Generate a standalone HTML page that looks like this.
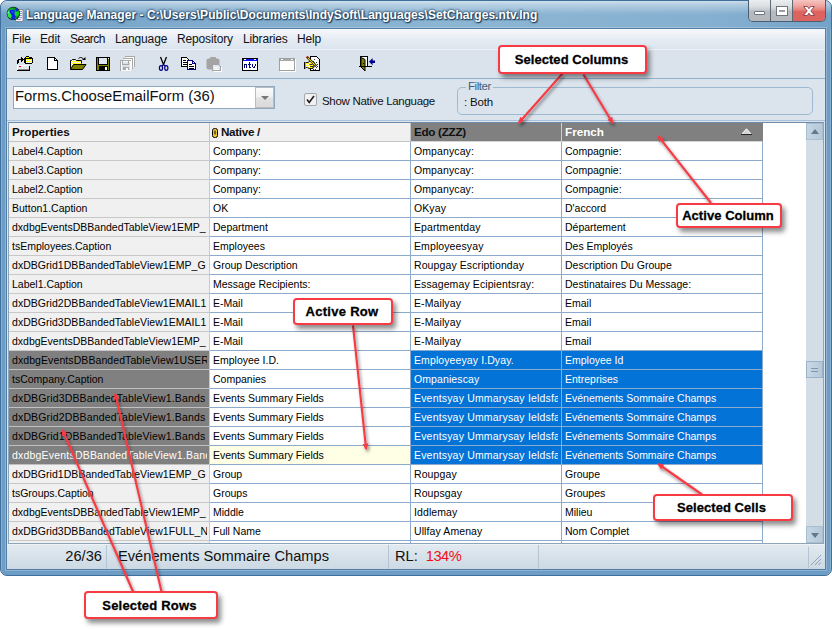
<!DOCTYPE html>
<html><head><meta charset="utf-8"><title>Language Manager</title>
<style>
*{box-sizing:border-box;margin:0;padding:0}
html,body{width:832px;height:629px;background:#fff;overflow:hidden;font-family:"Liberation Sans",sans-serif;}
body{position:relative}
body>div,body>svg{position:absolute}
/* frame */
#win{left:0;top:0;width:832px;height:576px;border-radius:7px 7px 7px 7px;background:#6d9dc4;border:1px solid #3f6f9c;box-shadow:inset 1px 1px 0 rgba(255,255,255,.2),inset -1px 0 0 rgba(255,255,255,.2)}
#tb{left:1px;top:1px;width:830px;height:27px;border-radius:6px 6px 0 0;background:linear-gradient(180deg,rgba(255,255,255,.6) 0,rgba(255,255,255,.4) 3px,rgba(255,255,255,.05) 12px,rgba(255,255,255,0) 14px),linear-gradient(90deg,#70a0c6 0%,#80abcd 22%,#8db6d3 55%,#86b0d0 85%,#74a3c8 100%)}
#title{left:26px;top:8px;font-size:12px;font-weight:bold;color:#fff;white-space:nowrap;letter-spacing:.05px;text-shadow:0 0 3px #1d3d5c,0 0 2px #1d3d5c,1px 1px 1px #1d3d5c}
#capbtns{left:748px;top:0;height:22px;width:78px;border:1px solid #4b5f72;border-top:none;border-radius:0 0 5px 5px;overflow:hidden;display:flex}
.cb{height:100%;position:relative}
.cb.min,.cb.max{width:22px;background:linear-gradient(180deg,#eceef0 0,#dcdfe2 30%,#c4c8cc 48%,#b7bbbf 55%,#b4b8bc 100%);border-right:1px solid #5d6a76}
.cb.cls{width:32px;background:linear-gradient(180deg,#f6c6c3 0,#efa19c 30%,#e67f79 48%,#de625c 56%,#dc6560 100%)}
.cb.min i{position:absolute;left:5px;top:11px;width:11px;height:4px;background:#fff;border:1px solid #6b7680;border-radius:1px}
.cb.max i{position:absolute;left:6px;top:7px;width:10px;height:8px;border:2.5px solid #fff;border-top-width:3px;border-bottom-width:3px;outline:1px solid #6b7680;background:#9aa0a6;border-radius:0}
.cb.cls svg{position:absolute;left:10px;top:6px}
#client{left:6px;top:28px;width:820px;height:542px;box-shadow:0 0 0 1px rgba(255,255,255,.22);background:#dbe4ed;border:1px solid #547fa9}
#menu{left:7px;top:29px;width:818px;height:20px;background:linear-gradient(180deg,#f6f8fb 0,#e6ecf3 50%,#dbe4ee 100%);font-size:12px;color:#111}
#menu span{position:absolute;top:3px;letter-spacing:-.15px}
#tool{left:7px;top:49px;width:818px;height:30px;background:#dae3ec;border-top:1px solid #eef2f7;border-bottom:1px solid #8fb0cf}
#tool svg{position:absolute}
#combo{left:13px;top:86px;width:262px;height:23px;background:#fff;border:1px solid #8da9c4;font-size:14.85px;color:#111;line-height:19px;padding-left:1px;white-space:nowrap}
#dd{position:absolute;right:0;top:0;width:19px;height:21px;background:linear-gradient(180deg,#fbfbfb 0,#f0f0f0 48%,#e1e1e1 52%,#dbdbdb 100%);border:1px solid #bcbcbc}
#dd i{position:absolute;left:5px;top:8px;border:4px solid transparent;border-top:4px solid #777;border-bottom:none}
#chk{left:304px;top:93px;width:13px;height:13px;background:#f1f1f1;border:1px solid #a4a8ad;border-radius:2px}
#chk svg{position:absolute;left:-1px;top:-1px}
#chkl{left:322px;top:95px;font-size:11.5px;color:#111;letter-spacing:-.3px;white-space:nowrap}
#fs{left:457px;top:87px;width:356px;height:28px;border:1px solid #9dbad3;border-radius:5px}
#fsl{left:466px;top:80px;font-size:11.5px;color:#3f607f;background:#dbe4ed;padding:0 2px;letter-spacing:-.45px}
#fst{left:464px;top:96px;font-size:11.5px;color:#111;letter-spacing:-.2px}
/* grid */
#gline{left:7px;top:120px;width:818px;height:1px;background:#a9c2da}
#grid{left:8px;top:122px;width:816px;height:422px;background:#fff;border:1px solid #8ea4b8;border-top-color:#6f8ca8}
#hdr{left:9px;top:123px;width:754px;height:19px}
.h{position:absolute;top:0;height:19px;font-size:11.7px;font-weight:bold;line-height:17px;padding-left:3px;white-space:nowrap;overflow:hidden;border-bottom:1px solid #c4c4c4;border-right:1px solid #c4c4c4;background:#f0f0f0;color:#111}
.h1{left:0;width:201px}.h3{letter-spacing:-.3px}.h2{left:201px;width:201px;padding-left:2px;letter-spacing:-.32px}.h3{left:402px;width:151px}.h4{left:553px;width:201px}
.h3,.h4{background:#808080;border-color:#d4d4d4;border-right-color:#d0d0d0}
.h4{color:#fff;border-right-color:#808080}
.h .clip{position:relative;top:2px;margin-right:3px}
.h .sort{position:absolute;right:10px;top:5px}
.r{left:9px;width:754px;height:19px;font-size:10.5px;line-height:18px;color:#000}
.c{position:absolute;top:0;height:19px;padding-left:3px;white-space:nowrap;overflow:hidden;border-bottom:1px solid #8caacb;border-right:1px solid #8caacb;background:#fff}
.c1{left:0;width:201px;background:#f0f0f0;border-color:#c8c8c8}
.c2{left:201px;width:201px}.c3{left:402px;width:151px;letter-spacing:.1px}.c4{left:553px;width:201px}
.sel .c1{background:#808080;border-bottom-color:#c0c0c0}
.sel .c3,.sel .c4{background:#0473d7;color:#fff}
.act .c1{color:#fff}
.act .c2{background:#ffffe6}
#lastrow{left:9px;top:541px;width:754px;height:2px;background:linear-gradient(90deg,#f0f0f0 0,#f0f0f0 200px,#c8c8c8 200px,#c8c8c8 201px,#fff 201px,#fff 401px,#8caacb 401px,#8caacb 402px,#fff 402px,#fff 552px,#8caacb 552px,#8caacb 553px,#fff 553px,#fff 753px,#8caacb 753px,#8caacb 754px)}
#sb{left:806px;top:123px;width:17px;height:420px;background:#d3dde6}
.sbb{position:absolute;left:0;width:17px;height:17px;background:linear-gradient(90deg,#c5d5e3,#b5c9da);border:1px solid #a9bed0}
.sbb.up{top:0}.sbb.dn{bottom:0}
.sbb i{position:absolute;left:4px;border:4.5px solid transparent}
.sbb.up i{border-bottom:5px solid #62788d;border-top:none;top:5px}
.sbb.dn i{top:6px;border-top:5px solid #62788d;border-bottom:none}
.thumb{position:absolute;left:0;top:238px;width:17px;height:17px;background:linear-gradient(90deg,#c9d8e6,#b4c8da);border:1px solid #9bb3c8}
.thumb i{position:absolute;left:4px;top:6px;width:7px;height:4px;border-top:1px solid #7f97ad;border-bottom:1px solid #7f97ad}

/* status */
#status{left:7px;top:544px;width:818px;height:25px;background:linear-gradient(180deg,#e2eaf0 0,#d8e2ea 45%,#ccd9e3 100%);border-top:1px solid #eef3f8;font-size:14.67px;color:#111}
.p{position:absolute;top:0;height:24px;line-height:22px;white-space:nowrap}
.p1{left:0;width:100px;text-align:right;padding-right:4px;border-right:1px solid #b5c4d3}
.p2{left:101px;width:281px;padding-left:10px;border-right:1px solid #b5c4d3}
.p3{left:383px;width:149px;padding-left:5px;border-right:1px solid #b5c4d3}
.p3 b{font-weight:normal;color:#f01018;margin-left:8px;letter-spacing:-.5px}
#grip{position:absolute;right:3px;bottom:3px}
#gdiv{position:absolute;left:801px;top:2px;width:1px;height:21px;background:#b5c4d3}
/* callouts */
.co{letter-spacing:.05px;background:#fff;border:2px solid #f73a44;border-radius:4px;box-shadow:3px 4px 5px rgba(0,0,0,.45);font-weight:bold;font-size:13px;color:#111;text-align:center;white-space:nowrap}

.c:after{content:"";position:absolute;right:0;top:0;width:2px;height:18px;background:inherit}
.co{-webkit-text-stroke:.3px #000;color:#000}
.c3:after{width:3px}

</style></head>
<body>
<div id="win"></div>
<div id="tb"></div>
<svg width="20" height="18" viewBox="6 6 20 18" style="left:6px;top:6px">
<defs><radialGradient id="gg" cx="30%" cy="55%" r="80%"><stop offset="0" stop-color="#38f048"/><stop offset=".5" stop-color="#0cb81e"/><stop offset="1" stop-color="#04500e"/></radialGradient>
<clipPath id="gc"><circle cx="13.400" cy="13.400" r="6.300"/></clipPath></defs>
<rect x="15.500" y="9.500" width="7.500" height="12" fill="#f6f4fc" stroke="#8a8896" stroke-width="1"/><path d="M17 11.500h5M17 13.500h5M17 15.500h5M17 17.500h5M17 19.500h4" stroke="#6a5fd0" stroke-width="1.200" opacity=".65"/>
<circle cx="13.400" cy="13.400" r="6.700" fill="#08200e"/>
<circle cx="13.400" cy="13.400" r="6.200" fill="url(#gg)"/>
<g clip-path="url(#gc)">
<path d="M9.800 10l4.500-.4.500 1.400-.3 2 .3 2 1 1.800-1 2.200-2.800 1-.8-2 .4-2-1-2.200-1-1.800z" fill="#0a20e4"/>
<path d="M15.600 8l2 .6.400 2-1.500.8-1-1.400z" fill="#0a20e4"/>
<path d="M11 11l2.500-.3.500 2-2 .5z" fill="#1048f0"/>
<path d="M7.500 12l1.500-.5.300 1.500-1.500.5z" fill="#9ff" opacity=".8"/>
<path d="M15.500 12l3-1 1 2.500-1.500 2.500-2.500-.5-.5-2z" fill="#14e028" opacity=".8"/>
<path d="M8 14l3 .3.500 2.500-1.500 1.200-2-1.500z" fill="#30f040" opacity=".7"/>
</g>
</svg>

<div id="title">Language Manager - C:\Users\Public\Documents\IndySoft\Languages\SetCharges.ntv.lng</div>
<div id="capbtns"><div class="cb min"><i></i></div><div class="cb max"><i></i></div><div class="cb cls"><svg width="12" height="10" viewBox="0 0 12 10"><path d="M0.600 0.500h3.700l1.700 2.200 1.700-2.200h3.700L7.800 4.900l3.800 4.600H7.800L6 7.200 4.200 9.500H0.400l3.800-4.600z" fill="#fff" stroke="#7a3038" stroke-width="0.8"/></svg></div></div>
<div id="client"></div>
<div id="menu"><span style="left:5px">File</span><span style="left:33px">Edit</span><span style="left:63px;letter-spacing:-.5px">Search</span><span style="left:108px">Language</span><span style="left:170px">Repository</span><span style="left:236px">Libraries</span><span style="left:290px">Help</span></div>
<div id="tool"><svg width="819" height="30" viewBox="6 49 819 30" style="left:-1px;top:-1px" shape-rendering="crispEdges">
<defs>
<pattern id="dy" width="2" height="2" patternUnits="userSpaceOnUse"><rect width="2" height="2" fill="#ffff00"/><rect width="1" height="1" fill="#fff"/><rect x="1" y="1" width="1" height="1" fill="#fff"/></pattern>
</defs>
<!-- 1 repo open -->
<g>
<path d="M17 64v-4h1v-1h3v-2h1v1h1v1h1v1h-1v1h-1v1h-1v-2h-2v3z" fill="#000"/>
<path d="M25 57h1v-1h3v1h3v1h1v5h-1v1h-7v-1h-1v-5h1z" fill="#000"/>
<rect x="26" y="59" width="6" height="4" fill="url(#dy)"/><rect x="26" y="57" width="3" height="1" fill="#ffff00"/>
<rect x="17" y="65" width="12" height="5" fill="#e4e8ec"/><rect x="17" y="65" width="12" height="1" fill="#fff"/><rect x="17" y="65" width="1" height="5" fill="#fff"/>
<rect x="17" y="70" width="13" height="1" fill="#000"/><rect x="29" y="66" width="1" height="5" fill="#000"/><rect x="18" y="69" width="11" height="1" fill="#8a8a8a"/>
<rect x="19" y="66" width="2" height="1" fill="#f00"/>
</g>
<!-- 2 new -->
<path d="M47.5 57.5h7l3 3v9h-10z" fill="#fff" stroke="#000" stroke-width="1"/><path d="M54.5 57.5v3h3" fill="none" stroke="#000" stroke-width="1"/>
<!-- 3 open -->
<g shape-rendering="geometricPrecision">
<path d="M70.5 69.5v-9h1l1-1h3l1 1h5v3" fill="url(#dy)" stroke="#000" stroke-width="1"/>
<path d="M70.5 69.5l3-5h12.5l-3.500 5z" fill="#808000" stroke="#000" stroke-width="1"/>
<path d="M78.500 58.500c1.500-1.500 4-1.500 5.500 1.500" fill="none" stroke="#000" stroke-width="1"/><path d="M82 60h3.500v-3z" fill="#000"/>
</g>
<!-- 4 save -->
<rect x="96" y="57" width="14" height="14" fill="#000"/><rect x="97" y="58" width="12" height="12" fill="#808000"/>
<rect x="99" y="58" width="8" height="6" fill="#dfe6ee"/><rect x="98" y="58" width="1" height="7" fill="#000"/><rect x="107" y="58" width="1" height="7" fill="#000"/><rect x="98" y="64" width="10" height="1" fill="#000"/>
<rect x="99" y="66" width="9" height="4" fill="#000"/><rect x="105" y="67" width="2" height="3" fill="#fff"/><rect x="108" y="58" width="1" height="1" fill="#fff"/>
<!-- 5 save all disabled -->
<g fill="none" stroke-width="1">
<path d="M124.500 56.500h10v10" stroke="#a8a8a8"/><path d="M125.500 57.500h8v9" stroke="#fff"/>
<path d="M122.500 58.500h10v10" stroke="#a8a8a8"/><path d="M123.500 59.500h8v9" stroke="#fff"/>
<rect x="120.500" y="60.500" width="10" height="10" stroke="#a8a8a8"/><rect x="121.500" y="61.500" width="9" height="9" stroke="#fff" opacity=".9"/>
<rect x="122.500" y="60.500" width="6" height="4" stroke="#a8a8a8"/>
</g><rect x="123" y="67" width="6" height="3" fill="#a8a8a8"/><rect x="126" y="68" width="2" height="2" fill="#fff"/>
<!-- 6 cut -->
<g shape-rendering="geometricPrecision" fill="none">
<path d="M160.500 57l3 7.500M166.500 57l-3 7.500" stroke="#000" stroke-width="1.300"/>
<path d="M163.500 64.500l-1.500 1.500M163.500 64.500l1.500 1.500" stroke="#000080" stroke-width="1.200"/>
<ellipse cx="161" cy="68" rx="1.600" ry="2.300" stroke="#000080" stroke-width="1.200"/><ellipse cx="166.300" cy="68" rx="1.600" ry="2.300" stroke="#000080" stroke-width="1.200"/>
</g>
<!-- 7 copy -->
<path d="M181.500 57.500h5l2 2v7h-7z" fill="#fff" stroke="#000"/><path d="M183 60h3M183 62h4M183 64h4" stroke="#000"/>
<path d="M187.500 60.500h5l3 3v6h-8z" fill="#fff" stroke="#000080"/><path d="M192.500 60.500v3h3" fill="none" stroke="#000080"/><path d="M189 64h3M189 66h5M189 68h5" stroke="#000"/>
<!-- 8 paste disabled -->
<g shape-rendering="geometricPrecision"><rect x="206.500" y="58.500" width="13" height="11" rx="2" fill="#a4a4a4"/><rect x="210" y="57" width="6" height="3" rx="1" fill="#a4a4a4"/></g>
<path d="M212.500 64.500h6l2 2v4h-8z" fill="#dfe6ee" stroke="#a4a4a4"/><path d="M213.500 71.500h8v-5" fill="none" stroke="#fff"/><path d="M214 67h4M214 69h5" stroke="#fff"/>
<!-- 9 ntv -->
<rect x="242.500" y="58.500" width="15" height="12" fill="#fff" stroke="#000"/><rect x="243" y="59" width="14" height="2" fill="#1010ff"/><rect x="244" y="59" width="2" height="1" fill="#fff"/><rect x="254" y="59" width="2" height="1" fill="#fff"/>
<path d="M244.500 68v-4M244.500 64.500h2v3.500M249.500 62v5.500h1.500M248 64.500h3M252.500 64v2l1 1.500h.5l1-1.500v-2" fill="none" stroke="#000080" stroke-width="1"/>
<!-- 10 window -->
<rect x="279.500" y="58.500" width="15" height="12" fill="#fff" stroke="#a0a0a0"/><rect x="280" y="59" width="14" height="2" fill="#a8a8a8"/><rect x="281" y="59" width="2" height="1" fill="#fff"/><rect x="291" y="59" width="2" height="1" fill="#fff"/><rect x="280" y="71" width="16" height="1" fill="#fff"/><rect x="295" y="59" width="1" height="12" fill="#fff"/>
<!-- 11 props -->
<path d="M310.500 56.500h6l3 3v11h-9z" fill="#fff" stroke="#000"/><path d="M314 59h2M313 61h2M316 62h2M317 64h1M316 67h2M313 69h4M317 66h1" stroke="#333" stroke-dasharray="1 1"/>
<g shape-rendering="geometricPrecision">
<path d="M305.500 62.500h2.500l1.500-1h3.500l1.500 1.500v2l-1 1h.5v1.200h-1v1.300h-4l-1.500-1h-2z" fill="url(#dy)" stroke="#000" stroke-width="0.900"/>
<path d="M307 57l9.200 9.200" stroke="#000" stroke-width="2.400"/><path d="M307.600 57.600l8 8" stroke="#f0e000" stroke-width="1.100"/><path d="M306.600 56.600l1.300 1.300" stroke="#e00000" stroke-width="1.700"/>
<path d="M309.500 64.500h3M310 66.500h3" stroke="#000" stroke-width=".8"/>
</g>
<rect x="304" y="62" width="2" height="7" fill="#00d8e8"/><rect x="303.500" y="62" width="1" height="7" fill="#000"/>
<!-- 12 exit -->
<rect x="360.500" y="56.500" width="7" height="10" fill="#fff" stroke="#000"/>
<g shape-rendering="geometricPrecision"><path d="M361 57.500l4 2v11.500l-4-4z" fill="#808000" stroke="#000" stroke-width="1"/><path d="M369 61.700l3.600-3.600v2.300h2.400v2.600h-2.400v2.300z" fill="#000090"/></g>
<rect x="359" y="66" width="13" height="1" fill="#000"/><rect x="363" y="63" width="1" height="1" fill="#000"/>
</svg>
</div>
<div id="combo"><span>Forms.ChooseEmailForm (36)</span><div id="dd"><i></i></div></div>
<div id="chk"><svg width="13" height="13" viewBox="0 0 13 13"><path d="M3 6.5l2.2 3L10 3" fill="none" stroke="#1c1c1c" stroke-width="1.6"/></svg></div>
<div id="chkl">Show Native Language</div>
<div id="fs"></div><div id="fsl">Filter</div><div id="fst">: Both</div>
<div id="gline"></div>
<div id="grid"></div>
<div id="hdr"><div class="h h1">Properties</div><div class="h h2"><svg class="clip" width="6" height="10" viewBox="0 0 6 10"><rect x="0.5" y="0.5" width="5" height="9" rx="2" fill="#f4c430" stroke="#000" stroke-width="1"/><rect x="2.4" y="2.5" width="1.2" height="4" fill="#222"/></svg>Native /</div><div class="h h3">Edo (ZZZ)</div><div class="h h4">French<svg class="sort" width="11" height="7" viewBox="0 0 11 7"><path d="M0.5 6.5L5.5 0.8 10.5 6.5z" fill="#d4d4d4" stroke="#fff" stroke-width="1"/><path d="M0 6.6h11" stroke="#111" stroke-width="1"/></svg></div></div>
<div class="r" style="top:142px"><div class="c c1">Label4.Caption</div><div class="c c2">Company:</div><div class="c c3">Ompanycay:</div><div class="c c4">Compagnie:</div></div>
<div class="r" style="top:161px"><div class="c c1">Label3.Caption</div><div class="c c2">Company:</div><div class="c c3">Ompanycay:</div><div class="c c4">Compagnie:</div></div>
<div class="r" style="top:180px"><div class="c c1">Label2.Caption</div><div class="c c2">Company:</div><div class="c c3">Ompanycay:</div><div class="c c4">Compagnie:</div></div>
<div class="r" style="top:199px"><div class="c c1">Button1.Caption</div><div class="c c2">OK</div><div class="c c3">OKyay</div><div class="c c4">D'accord</div></div>
<div class="r" style="top:218px"><div class="c c1">dxdbgEventsDBBandedTableView1EMP_</div><div class="c c2">Department</div><div class="c c3">Epartmentday</div><div class="c c4">Département</div></div>
<div class="r" style="top:237px"><div class="c c1">tsEmployees.Caption</div><div class="c c2">Employees</div><div class="c c3">Employeesyay</div><div class="c c4">Des Employés</div></div>
<div class="r" style="top:256px"><div class="c c1" style="letter-spacing:0.04px">dxDBGrid1DBBandedTableView1EMP_G</div><div class="c c2">Group Description</div><div class="c c3">Roupgay Escriptionday</div><div class="c c4">Description Du Groupe</div></div>
<div class="r" style="top:275px"><div class="c c1">Label1.Caption</div><div class="c c2">Message Recipients:</div><div class="c c3">Essagemay Ecipientsray:</div><div class="c c4">Destinataires Du Message:</div></div>
<div class="r" style="top:294px"><div class="c c1" style="letter-spacing:0.04px">dxDBGrid2DBBandedTableView1EMAIL1</div><div class="c c2">E-Mail</div><div class="c c3">E-Mailyay</div><div class="c c4">Email</div></div>
<div class="r" style="top:313px"><div class="c c1" style="letter-spacing:0.04px">dxDBGrid3DBBandedTableView1EMAIL1</div><div class="c c2">E-Mail</div><div class="c c3">E-Mailyay</div><div class="c c4">Email</div></div>
<div class="r" style="top:332px"><div class="c c1">dxdbgEventsDBBandedTableView1EMP_</div><div class="c c2">E-Mail</div><div class="c c3">E-Mailyay</div><div class="c c4">Email</div></div>
<div class="r sel" style="top:351px"><div class="c c1" style="letter-spacing:0.085px">dxdbgEventsDBBandedTableView1USER</div><div class="c c2">Employee I.D.</div><div class="c c3">Employeeyay I.Dyay.</div><div class="c c4">Employee Id</div></div>
<div class="r sel" style="top:370px"><div class="c c1">tsCompany.Caption</div><div class="c c2">Companies</div><div class="c c3">Ompaniescay</div><div class="c c4">Entreprises</div></div>
<div class="r sel" style="top:389px"><div class="c c1" style="letter-spacing:0.15px">dxDBGrid3DBBandedTableView1.Bands</div><div class="c c2">Events Summary Fields</div><div class="c c3" style="letter-spacing:.18px">Eventsyay Ummarysay Ieldsfay</div><div class="c c4">Evénements Sommaire Champs</div></div>
<div class="r sel" style="top:408px"><div class="c c1" style="letter-spacing:0.15px">dxDBGrid2DBBandedTableView1.Bands</div><div class="c c2">Events Summary Fields</div><div class="c c3" style="letter-spacing:.18px">Eventsyay Ummarysay Ieldsfay</div><div class="c c4">Evénements Sommaire Champs</div></div>
<div class="r sel" style="top:427px"><div class="c c1" style="letter-spacing:0.15px">dxDBGrid1DBBandedTableView1.Bands</div><div class="c c2">Events Summary Fields</div><div class="c c3" style="letter-spacing:.18px">Eventsyay Ummarysay Ieldsfay</div><div class="c c4">Evénements Sommaire Champs</div></div>
<div class="r sel act" style="top:446px"><div class="c c1" style="letter-spacing:0.2px">dxdbgEventsDBBandedTableView1.Bands</div><div class="c c2">Events Summary Fields</div><div class="c c3" style="letter-spacing:.18px">Eventsyay Ummarysay Ieldsfay</div><div class="c c4">Evénements Sommaire Champs</div></div>
<div class="r" style="top:465px"><div class="c c1" style="letter-spacing:0.04px">dxDBGrid1DBBandedTableView1EMP_G</div><div class="c c2">Group</div><div class="c c3">Roupgay</div><div class="c c4">Groupe</div></div>
<div class="r" style="top:484px"><div class="c c1">tsGroups.Caption</div><div class="c c2">Groups</div><div class="c c3">Roupsgay</div><div class="c c4">Groupes</div></div>
<div class="r" style="top:503px"><div class="c c1">dxdbgEventsDBBandedTableView1EMP_</div><div class="c c2">Middle</div><div class="c c3">Iddlemay</div><div class="c c4">Milieu</div></div>
<div class="r" style="top:522px"><div class="c c1" style="letter-spacing:0.04px">dxDBGrid3DBBandedTableView1FULL_N</div><div class="c c2">Full Name</div><div class="c c3">Ullfay Amenay</div><div class="c c4">Nom Complet</div></div>
<div id="lastrow"></div>
<div id="sb"><div class="sbb up"><i></i></div><div class="thumb"><i></i></div><div class="sbb dn"><i></i></div></div>
<div id="status"><div class="p p1">26/36</div><div class="p p2">Evénements Sommaire Champs</div><div class="p p3">RL:<b>134%</b></div><div id="gdiv"></div><svg id="grip" width="12" height="12" viewBox="0 0 12 12"><path d="M11 1L1 11M11 5L5 11M11 8.5L8.5 11" stroke="#8fa3b8" stroke-width="1"/></svg></div>
<svg id="arrows" width="832" height="629" style="left:0;top:0" viewBox="0 0 832 629">
<defs><filter id="sh" x="-20%" y="-20%" width="140%" height="140%"><feDropShadow dx="1.5" dy="2.5" stdDeviation="1.8" flood-color="#000" flood-opacity=".45"/></filter>
<marker id="ah" viewBox="0 0 10 10" refX="8" refY="5" markerUnits="userSpaceOnUse" markerWidth="6.6" markerHeight="6.6" orient="auto"><path d="M0 0.5L10 5 0 9.5z" fill="#f73a44"/></marker></defs>
<g stroke="#f73a44" stroke-width="2.15" fill="none" filter="url(#sh)" marker-end="url(#ah)">
<path d="M562.5 73.5L518.9 122.7"/><path d="M583.5 74.5L612.5 122.8"/>
<path d="M711 203L658.4 136.3"/>
<path d="M353 325.5L366.1 448.9"/>
<path d="M702 494.5L658.3 464.0"/>
<path d="M133 591.5L62.6 430.2"/><path d="M161.5 591.5L115.3 394.1"/>
</g></svg>
<div class="co" style="left:498px;top:45px;width:149px;height:29px;line-height:26px;padding-right:2px">Selected Columns</div>
<div class="co" style="left:676px;top:203px;width:106px;height:25px;line-height:22px;padding-right:2px">Active Column</div>
<div class="co" style="left:293px;top:298px;width:100px;height:27px;line-height:24px;letter-spacing:.3px;padding-right:2px">Active Row</div>
<div class="co" style="left:653px;top:494px;width:140px;height:27px;line-height:24px;padding-right:3px">Selected Cells</div>
<div class="co" style="left:84px;top:591px;width:134px;height:28px;line-height:25px;letter-spacing:.2px;padding-right:3px">Selected Rows</div>

</body></html>
